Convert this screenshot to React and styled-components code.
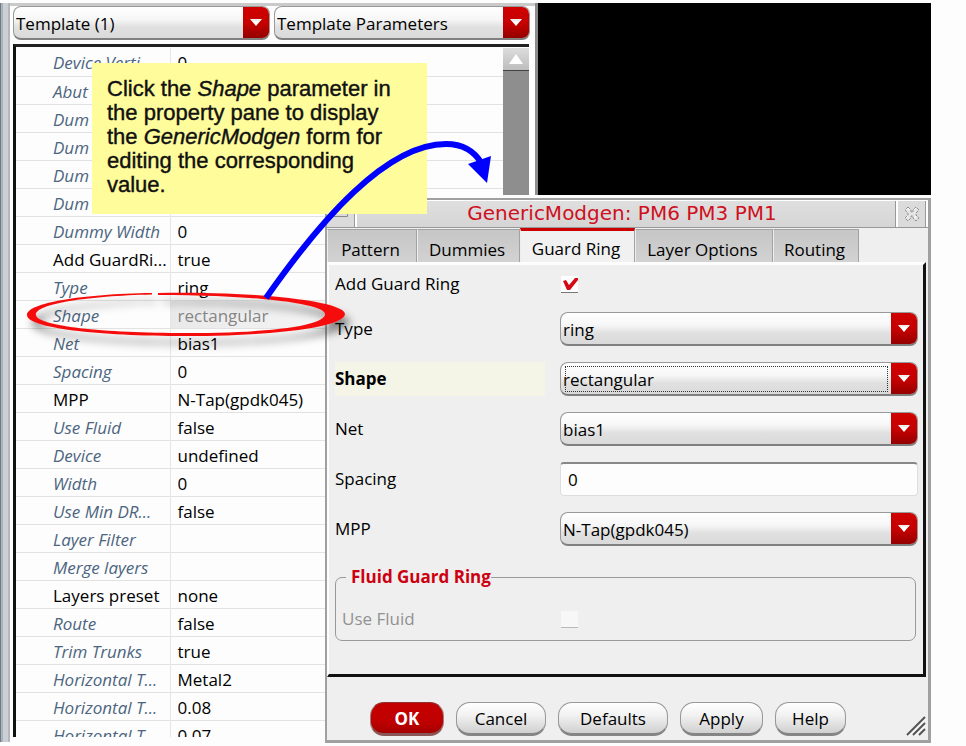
import React from "react";
import styled, { createGlobalStyle, css } from "styled-components";

const GlobalStyle = createGlobalStyle`
  *, *::before, *::after { box-sizing: border-box; }
  body {
    margin: 0;
    background: #fdfdfd;
    color: #000;
    font: 17px/24px "Open Sans", "Noto Sans", sans-serif;
  }
  button, input, select { font: inherit; color: inherit; margin: 0; }
`;

const Page = styled.main`
  position: relative;
  display: flex;
  align-items: flex-start;
  height: 100vh;
  min-height: 746px;
  padding: 3px 35px 4px 0;
  overflow: hidden;
`;

const SidePane = styled.section`
  display: flex;
  width: 535px;
  height: 100%;
  flex: none;
`;

const WindowEdge = styled.div`
  width: 10px;
  flex: none;
  background: linear-gradient(90deg, #6b7b8c 0 1px, #aab2ba 1px 3px, #cdcfd2 3px 8px, #b2b8be 8px 10px);
`;

const PaneBody = styled.div`
  display: flex;
  flex: 1;
  min-width: 0;
  flex-direction: column;
  gap: 4px;
  padding: 0 6px 5px 3px;
  border-top: 3px solid #cacaca;
`;

const PaneToolbar = styled.div`
  display: grid;
  grid-template-columns: 257px 256px;
  gap: 4px;
`;

const ComboBox = styled.div`
  display: grid;
  grid-template-columns: 1fr 26px;
  height: 34px;
  border: 1px solid #999;
  border-bottom: 2px solid #808080;
  border-radius: 8px;
  background: linear-gradient(#fff 0%, #f6f6f6 40%, #e0e0e0 65%, #dadada 100%);
  overflow: hidden;
`;

const Select = styled.select`
  grid-area: 1 / 1 / 2 / 3;
  appearance: none;
  min-width: 0;
  padding: 2px 30px 0 2px;
  border: 0;
  outline: 0;
  background: transparent;
`;

const SelectArrow = styled.span`
  grid-area: 1 / 2;
  display: grid;
  place-items: center;
  background: linear-gradient(#d00000 0%, #c40000 55%, #940000 100%);
  pointer-events: none;
`;

const FocusRing = styled.span`
  grid-area: 1 / 1;
  margin: 3px 3px 2px 4px;
  border: 1px dotted #333;
  pointer-events: none;
`;

const ListFrame = styled.div`
  display: flex;
  flex: 1;
  min-height: 0;
  padding-top: 1px;
  border-top: 3px solid #222;
  border-left: 3px solid #111;
  background: #fdfdfd;
  overflow: hidden;
`;

const PropertyTable = styled.table`
  flex: 1;
  align-self: flex-start;
  table-layout: fixed;
  border-collapse: collapse;
`;

const PropertyRow = styled.tr`
  height: 28px;
  border-bottom: 1px solid #e2e2e2;
`;

const NameCell = styled.th`
  width: 154px;
  padding: 3px 0 0 37px;
  border-right: 1px solid #e6e6e6;
  font-weight: 400;
  font-style: ${(p) => (p.$plain ? "normal" : "italic")};
  color: ${(p) => (p.$plain ? "#000" : "#4c6580")};
  line-height: 24px;
  text-align: left;
  white-space: nowrap;
`;

const ValueCell = styled.td`
  padding: 3px 0 0 7px;
  line-height: 24px;
  white-space: nowrap;
  ${(p) =>
    p.$selected &&
    css`
      color: #858585;
      background: linear-gradient(90deg, #e9e9e9, #f3f3f3 40%, #fdfdfd 60%);
    `}
`;

const ScrollTrack = styled.div`
  width: 26px;
  flex: none;
  background: #8e8e8e;
`;

const ScrollButton = styled.button`
  display: grid;
  place-items: center;
  width: 100%;
  height: 23px;
  padding: 0;
  border: 0;
  border-bottom: 1px solid #444;
  background: linear-gradient(#ddd, #bdbdbd);
`;

const Canvas = styled.section`
  flex: 1;
  height: 192px;
  border-left: 3px solid #8c8c8c;
  background: #000;
`;

const Dialog = styled.section`
  position: absolute;
  top: 198px;
  left: 325px;
  right: 35px;
  display: flex;
  flex-direction: column;
  border: 2px solid #a0a0a0;
  border-right-width: 3px;
  border-bottom-width: 3px;
  background: #efefef;
  box-shadow: 0 -3px #fdfdfd;
`;

const TitleBar = styled.header`
  display: grid;
  grid-template-columns: 28px 1fr 28px;
  gap: 2px;
  height: 28px;
  padding-right: 2px;
  border-top: 1px solid #fff;
  border-bottom: 1px solid #989898;
  background: #fff;
`;

const Title = styled.h1`
  margin: 0;
  padding-right: 8px;
  border-right: 1px solid #999;
  background: linear-gradient(#e0dfe0, #d6d5d6);
  color: #cf1020;
  font: 400 20px/25px "DejaVu Sans", sans-serif;
  text-align: center;
`;

const WindowButton = styled.button`
  display: grid;
  place-items: center;
  padding: 0;
  border: 0;
  border-right: 1px solid #999;
  background: #dcdbdc;
`;

const Tabs = styled.div`
  display: flex;
  align-items: flex-end;
  height: 34px;
`;

const Tab = styled.button`
  width: ${(p) => p.$width}px;
  height: 33px;
  padding: 7px 3px 0 0;
  border: 1px solid #a2a2a2;
  border-left-color: #eee;
  border-bottom: 0;
  background: linear-gradient(#c6c6c6, #d2d2d2);
  line-height: 24px;
  text-align: center;
  ${(p) =>
    p.$active &&
    css`
      height: 34px;
      padding-top: 4px;
      border-top: 3px solid #cc0000;
      background: #f1f1f1;
    `}
`;

const TabPanel = styled.div`
  display: flex;
  flex-direction: column;
  gap: 16px;
  margin-right: 2px;
  padding: 7px 5px 33px 6px;
  border-top: 3px solid #fdfdfd;
  border-left: 2px solid #fdfdfd;
  border-right: 3px solid #111;
  border-bottom: 3px solid #111;
`;

const FieldRow = styled.div`
  display: grid;
  grid-template-columns: 210px 1fr;
  column-gap: 15px;
  align-items: center;
  min-height: ${(p) => (p.$short ? "24px" : "34px")};
`;

const FieldLabel = styled.label`
  ${(p) =>
    p.$changed &&
    css`
      padding: 5px 0;
      background: #f4f4e7;
      font-weight: 700;
    `}
  ${(p) => p.$disabled && "color: #929292;"}
`;

const TextBox = styled.input`
  width: 100%;
  height: 34px;
  min-width: 0;
  padding: 0 7px;
  border: 1px solid #ddd;
  border-top: 2px solid #888;
  border-radius: 4px;
  background: #fdfdfd;
`;

const TickBox = styled.span`
  display: grid;
  width: 17px;
  height: 17px;
  margin-left: 1px;
`;

const TickInput = styled.input`
  grid-area: 1 / 1;
  appearance: none;
  width: 17px;
  height: 17px;
  background: ${(p) => (p.disabled ? "#f7f7f7" : "#fff")};
  border-bottom: 1px solid ${(p) => (p.disabled ? "#b8b8b8" : "#777")};
`;

const TickMark = styled.svg`
  grid-area: 1 / 1;
  pointer-events: none;
`;

const Group = styled.fieldset`
  min-width: 0;
  margin: 3px 2px 0 0;
  padding: 13px 0 4px 6px;
  border: 1px solid #999;
  border-radius: 7px;
`;

const GroupTitle = styled.legend`
  margin-left: 4px;
  padding: 0 0 0 5px;
  color: #cc0010;
  font-weight: 700;
`;

const GroupRow = styled(FieldRow)`
  grid-template-columns: 203px 1fr;
`;

const Actions = styled.footer`
  display: flex;
  gap: 12px;
  align-items: flex-end;
  padding: 25px 2px 4px 43px;
`;

const ActionButton = styled.button`
  width: ${(p) => p.$width}px;
  height: 34px;
  padding: 2px 0 0;
  border: 1px solid #989898;
  border-bottom: 3px solid #858585;
  border-radius: 14px;
  background: linear-gradient(#fff, #f2f2f2 40%, #d0d0d0);
  text-align: center;
  line-height: 24px;
  ${(p) =>
    p.$primary &&
    css`
      border-color: #8c3030 #9a8080 #8a5555;
      background: linear-gradient(#c40000 0%, #c00000 60%, #a40000);
      color: #fff;
      font-weight: 700;
    `}
`;

const ResizeGrip = styled.svg`
  margin-left: auto;
`;

const Callout = styled.aside`
  position: absolute;
  top: 63px;
  left: 92px;
  width: 335px;
  height: 151px;
  padding: 14px 0 0 15px;
  background: #fffc9c;
  color: #111;
  font: 22px/24px "Liberation Sans", Arial, sans-serif;
  -webkit-text-stroke: 0.4px #111;
  white-space: nowrap;
`;

const Annotation = styled.svg`
  position: absolute;
  top: 0;
  left: 0;
  pointer-events: none;
`;

const properties = [
  ["Device Verti...", "0"],
  ["Abut", ""],
  ["Dum", ""],
  ["Dum", ""],
  ["Dum", ""],
  ["Dum", ""],
  ["Dummy Width", "0"],
  ["Add GuardRi...", "true", true],
  ["Type", "ring"],
  ["Shape", "rectangular"],
  ["Net", "bias1"],
  ["Spacing", "0"],
  ["MPP", "N-Tap(gpdk045)", true],
  ["Use Fluid", "false"],
  ["Device", "undefined"],
  ["Width", "0"],
  ["Use Min DR...", "false"],
  ["Layer Filter", ""],
  ["Merge layers", ""],
  ["Layers preset", "none", true],
  ["Route", "false"],
  ["Trim Trunks", "true"],
  ["Horizontal T...", "Metal2"],
  ["Horizontal T...", "0.08"],
  ["Horizontal T...", "0.07"],
];

const tabs = [
  ["Pattern", 90],
  ["Dummies", 103],
  ["Guard Ring", 115],
  ["Layer Options", 138],
  ["Routing", 86],
];

function Combo({ id, label, value, focused }) {
  return (
    <ComboBox>
      <Select id={id} aria-label={label} defaultValue={value}>
        <option>{value}</option>
      </Select>
      {focused && <FocusRing />}
      <SelectArrow>
        <svg width="12" height="7" viewBox="0 0 12 7" aria-hidden="true">
          <path d="M0 0H12L6 7Z" fill="#fff" />
          <path d="M1 1H11" stroke="#ddd" />
        </svg>
      </SelectArrow>
    </ComboBox>
  );
}

function ComboField({ id, label, value, changed }) {
  return (
    <FieldRow>
      <FieldLabel htmlFor={id} $changed={changed}>{label}</FieldLabel>
      <Combo id={id} value={value} focused={changed} />
    </FieldRow>
  );
}

export default function App() {
  return (
    <Page>
      <GlobalStyle />
      <SidePane>
        <WindowEdge />
        <PaneBody>
          <PaneToolbar>
            <Combo label="Template" value="Template (1)" />
            <Combo label="Parameter set" value="Template Parameters" />
          </PaneToolbar>
          <ListFrame>
            <PropertyTable>
              <tbody>
                {properties.map(([name, value, plain], i) => (
                  <PropertyRow key={i}>
                    <NameCell scope="row" $plain={plain}>{name}</NameCell>
                    <ValueCell $selected={name === "Shape"}>{value}</ValueCell>
                  </PropertyRow>
                ))}
              </tbody>
            </PropertyTable>
            <ScrollTrack>
              <ScrollButton aria-label="Scroll up">
                <svg width="14" height="10" viewBox="0 0 14 10" aria-hidden="true">
                  <path d="M7 0L14 10H0Z" fill="#fff" />
                </svg>
              </ScrollButton>
            </ScrollTrack>
          </ListFrame>
        </PaneBody>
      </SidePane>
      <Canvas aria-label="Layout canvas" />

      <Dialog role="dialog" aria-labelledby="dialog-title">
        <TitleBar>
          <WindowButton aria-label="Window menu">
            <svg width="14" height="6" viewBox="0 0 14 6" aria-hidden="true">
              <path d="M0.5 5V0.5H13" stroke="#fff" fill="none" />
              <path d="M0 5.500H13.500V0" stroke="#888" fill="none" />
            </svg>
          </WindowButton>
          <Title id="dialog-title">GenericModgen: PM6 PM3 PM1</Title>
          <WindowButton aria-label="Close">
            <svg width="16" height="16" viewBox="0 0 16 16" fill="none" aria-hidden="true">
              <path d="M4 1L7 4V6H9V4L12 1L15 4L12 7V9L15 12L12 15L9 12V10H7V12L4 15L1 12L4 9V7L1 4Z" fill="#e6e6e6" stroke="#8f8f8f" strokeDasharray="3 1" />
              <path d="M2 4L4 2L6 4M10 4L12 2M2 12L4 10M10 12L12 10" stroke="#fff" />
            </svg>
          </WindowButton>
        </TitleBar>
        <Tabs role="tablist">
          {tabs.map(([name, width]) => (
            <Tab key={name} role="tab" $width={width} $active={name === "Guard Ring"} aria-selected={name === "Guard Ring"}>
              {name}
            </Tab>
          ))}
        </Tabs>
        <TabPanel role="tabpanel">
          <FieldRow $short>
            <FieldLabel htmlFor="add-ring">Add Guard Ring</FieldLabel>
            <TickBox>
              <TickInput id="add-ring" type="checkbox" defaultChecked />
              <TickMark width="17" height="17" viewBox="0 0 17 17" aria-hidden="true">
                <path d="M2 5L5 4L8 9L14 2L17 2L17 4L9 14L6 14Z" fill="#d40a14" />
              </TickMark>
            </TickBox>
          </FieldRow>
          <ComboField id="type" label="Type" value="ring" />
          <ComboField id="shape" label="Shape" value="rectangular" changed />
          <ComboField id="net" label="Net" value="bias1" />
          <FieldRow>
            <FieldLabel htmlFor="spacing">Spacing</FieldLabel>
            <TextBox id="spacing" type="text" defaultValue="0" />
          </FieldRow>
          <ComboField id="mpp" label="MPP" value="N-Tap(gpdk045)" />
          <Group>
            <GroupTitle>Fluid Guard Ring</GroupTitle>
            <GroupRow>
              <FieldLabel htmlFor="use-fluid" $disabled>Use Fluid</FieldLabel>
              <TickBox>
                <TickInput id="use-fluid" type="checkbox" disabled />
              </TickBox>
            </GroupRow>
          </Group>
        </TabPanel>
        <Actions>
          <ActionButton $width={74} $primary>OK</ActionButton>
          <ActionButton $width={90}>Cancel</ActionButton>
          <ActionButton $width={110}>Defaults</ActionButton>
          <ActionButton $width={83}>Apply</ActionButton>
          <ActionButton $width={71}>Help</ActionButton>
          <ResizeGrip width="20" height="20" viewBox="0 0 20 20" aria-hidden="true">
            <path d="M1 19L19 1M7 19L19 7M13 19L19 13" stroke="#555" strokeWidth="2" />
            <path d="M3 20L20 3M9 20L20 9" stroke="#fff" />
          </ResizeGrip>
        </Actions>
      </Dialog>

      <Callout>
        Click the <em>Shape</em> parameter in<br />
        the property pane to display<br />
        the <em>GenericModgen</em> form for<br />
        editing the corresponding<br />
        value.
      </Callout>
      <Annotation width="520" height="370" viewBox="0 0 520 370" aria-hidden="true">
        <defs>
          <filter id="ring-shadow" x="-10%" y="-30%" width="120%" height="190%">
            <feDropShadow dx="5" dy="8" stdDeviation="4" floodColor="#000" floodOpacity="0.45" />
          </filter>
        </defs>
        <path
          d="M158 293C255 291 345 301 345 314C345 327 275 336 186 336C97 336 27 328 27 315C27 303 81 294 152 293V294.500C86 296 35 304 36 315C37 326 103 333 186 333C270 333 322 326 325 315C328 304 257 295 158 295Z"
          fill="#f5100c"
          filter="url(#ring-shadow)"
        />
        <path d="M266 298C320 221 386 144 446 144C461 144 474 150 482 164" fill="none" stroke="#0000ff" strokeWidth="6" />
        <path d="M468 164L491 156L487 183Z" fill="#0000ff" />
      </Annotation>
    </Page>
  );
}
